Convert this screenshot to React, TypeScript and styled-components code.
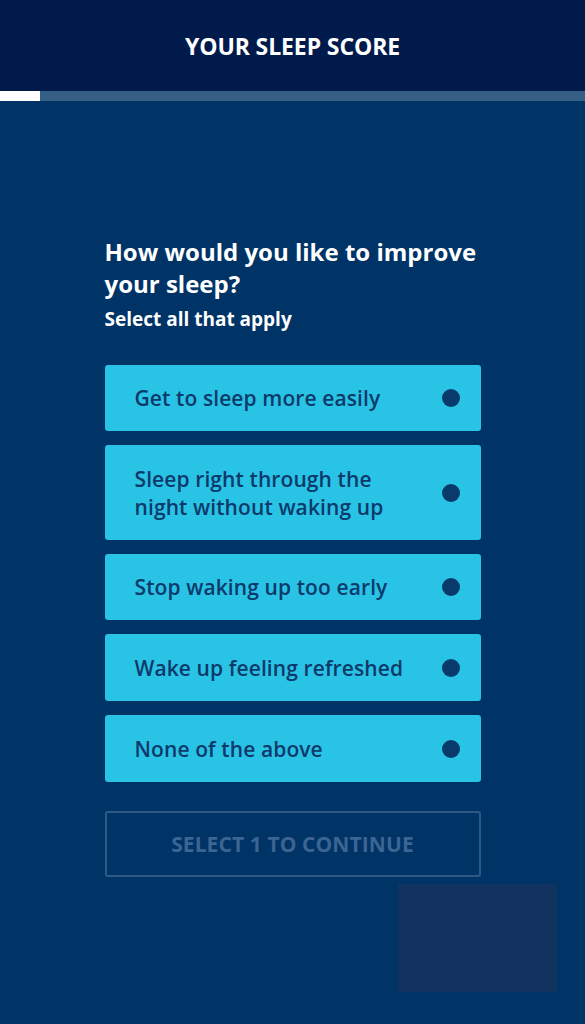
import React from "react";
import styled, { createGlobalStyle } from "styled-components";

const GlobalStyle = createGlobalStyle`
  html, body { margin: 0; padding: 0; background: #003366; }
  * { box-sizing: border-box; }
`;

const Page = styled.div`
  position: relative;
  min-height: 1024px;
  background: #003366;
  font-family: "Open Sans", "Liberation Sans", sans-serif;
  display: flex;
  flex-direction: column;
`;

const Header = styled.header`
  height: 91px;
  background: #001a4b;
  display: flex;
  align-items: center;
  justify-content: center;
`;

const HeaderTitle = styled.h1`
  margin: 0;
  color: #ffffff;
  font-size: 23px;
  font-weight: 700;
  letter-spacing: -0.1px;
  text-transform: uppercase;
`;

const Progress = styled.div`
  height: 10px;
  background: #365f86;
  display: flex;
`;

const ProgressFill = styled.div`
  background: #ffffff;
  height: 100%;
`;

const Content = styled.main`
  width: 376px;
  margin: 135px auto 0;
  display: flex;
  flex-direction: column;
`;

const Question = styled.h2`
  margin: 0;
  color: #ffffff;
  font-size: 24px;
  line-height: 32px;
  font-weight: 700;
`;

const Hint = styled.p`
  margin: 7px 0 0;
  color: #ffffff;
  font-size: 19px;
  line-height: 24px;
  font-weight: 700;
`;

const Options = styled.div`
  margin-top: 34px;
  display: flex;
  flex-direction: column;
  gap: 14px;
`;

const Option = styled.button<{ $height: number }>`
  display: flex;
  align-items: center;
  justify-content: space-between;
  width: 100%;
  min-height: ${(p) => p.$height}px;
  padding: 0 21px 0 30px;
  border: none;
  border-radius: 3px;
  background: #29c3e6;
  color: #0c3a6b;
  font-family: inherit;
  font-size: 21px;
  line-height: 28px;
  font-weight: 600;
  letter-spacing: 0.1px;
  text-align: left;
  cursor: pointer;
`;

const OptionText = styled.span`
  max-width: 282px;
`;

const Dot = styled.span`
  flex: none;
  width: 18px;
  height: 18px;
  border-radius: 50%;
  background: #083a6c;
`;

const ContinueButton = styled.button`
  margin-top: 29px;
  height: 66px;
  width: 100%;
  border: 2px solid #2e5985;
  border-radius: 3px;
  background: transparent;
  color: #3b6592;
  font-family: inherit;
  font-size: 21px;
  font-weight: 700;
  letter-spacing: 0.1px;
  text-transform: uppercase;
`;

const Widget = styled.div`
  position: absolute;
  left: 398px;
  top: 884px;
  width: 159px;
  height: 108px;
  background: #12325f;
`;

const options: { label: string; height: number }[] = [
  { label: "Get to sleep more easily", height: 66 },
  { label: "Sleep right through the night without waking up", height: 95 },
  { label: "Stop waking up too early", height: 66 },
  { label: "Wake up feeling refreshed", height: 67 },
  { label: "None of the above", height: 67 },
];

export default function App() {
  return (
    <>
      <GlobalStyle />
      <Page>
        <Header>
          <HeaderTitle>Your Sleep Score</HeaderTitle>
        </Header>
        <Progress>
          <ProgressFill style={{ width: `${(40 / 585) * 100}%` }} />
        </Progress>
        <Content>
          <Question>How would you like to improve your sleep?</Question>
          <Hint>Select all that apply</Hint>
          <Options>
            {options.map((o) => (
              <Option key={o.label} $height={o.height}>
                <OptionText>{o.label}</OptionText>
                <Dot />
              </Option>
            ))}
          </Options>
          <ContinueButton disabled>Select 1 to continue</ContinueButton>
        </Content>
        <Widget />
      </Page>
    </>
  );
}
